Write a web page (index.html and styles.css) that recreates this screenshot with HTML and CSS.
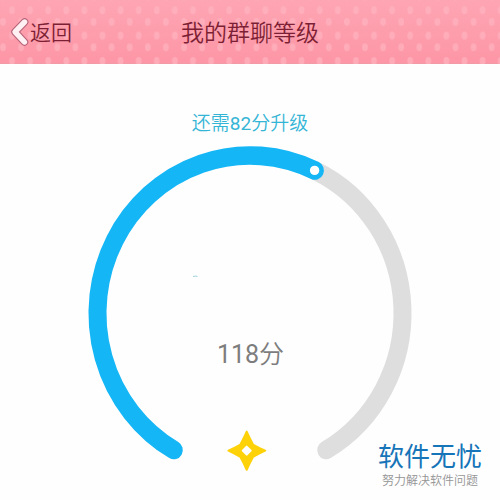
FILE: index.html
```
<!DOCTYPE html>
<html lang="zh-CN">
<head>
<meta charset="utf-8">
<title>我的群聊等级</title>
<link rel="stylesheet" href="styles.css">
</head>
<body>
<header class="bar">
  <svg class="dots" width="500" height="64" aria-hidden="true">
    <defs>
      <pattern id="dots" x="3" y="-2.6" width="18.1" height="25.4" patternUnits="userSpaceOnUse">
        <ellipse cx="9" cy="12.9" rx="2.9" ry="4" />
        <ellipse cx="0" cy="24.4" rx="2.9" ry="4" />
        <ellipse cx="18.1" cy="24.4" rx="2.9" ry="4" />
        <ellipse cx="0" cy="-1" rx="2.9" ry="4" />
        <ellipse cx="18.1" cy="-1" rx="2.9" ry="4" />
      </pattern>
    </defs>
    <rect width="500" height="64" fill="url(#dots)" />
  </svg>
  <a class="back">
    <svg class="chevron" width="20" height="30" viewBox="0 0 20 30">
      <path class="edge" d="M15.6 5 6 14.8 15.4 25" />
      <path class="core" d="M15.6 5 6 14.8 15.4 25" />
    </svg>
    <span>返回</span>
  </a>
  <h1 class="title">我的群聊等级</h1>
</header>
<main class="level">
  <p class="hint">还需<span class="num">82</span>分升级</p>
  <div class="gauge">
    <svg class="ring" width="340" height="340" viewBox="80 140 340 340">
      <g transform="translate(250 313.3) scale(1 1.035)">
        <path class="track" d="M64.9-138A152.5 152.5 0 0 1 76.2 132.1" />
        <path class="fill" d="M-76.2 132.1A152.5 152.5 0 0 1 64.9-138" />
      </g>
      <circle class="knob" cx="314.6" cy="170.4" r="4.7" />
      <path class="speck" d="M193 276.6q2-1 4.5-.2" />
      <path class="star" d="M246.7 431.6Q249.3 437.5 253 444.5Q259 448 265.2 450.6Q259 453.4 253 457Q249.3 463.7 246.7 469.8Q244.1 463.7 240.4 457Q234.4 453.4 228.4 450.6Q234.4 448 240.4 444.5Q244.1 437.5 246.7 431.6Z" />
      <path class="hole" d="M246.7 446.6 250.7 450.6 246.7 454.6 242.7 450.6Z" />
    </svg>
    <p class="score"><span class="num">118</span>分</p>
  </div>
</main>
<aside class="mark">
  <strong>软件无忧</strong>
  <span>努力解决软件问题</span>
</aside>
</body>
</html>
```
FILE: styles.css
```
* { box-sizing: border-box; }
body {
  margin: 0;
  width: 500px;
  height: 500px;
  position: relative;
  overflow: hidden;
  background: #fefefe;
  font-family: Roboto, "Noto Sans CJK SC", sans-serif;
  font-weight: 350;
}
h1, p { margin: 0; font-weight: 350; }
.num { font-weight: 400; }
.bar {
  position: relative;
  height: 64px;
  display: grid;
  grid-template-columns: 1fr auto 1fr;
  align-items: center;
  background: linear-gradient(#fea5b3, #fd96a6);
  border-bottom: 1px solid #f39aa7;
  color: #7d1f34;
}
.dots { position: absolute; inset: 0; fill: #ffb8c3; opacity: .6; }
.back {
  position: relative;
  display: flex;
  align-items: center;
  padding-left: 9px;
  font-size: 21px;
  line-height: 30px;
}
.back span { margin: 2px 0 0 1px; }
.chevron { fill: none; stroke-linecap: round; stroke-linejoin: round; }
.edge { stroke: #b8647a; stroke-width: 7.6; }
.core { stroke: #fff0f3; stroke-width: 5.4; }
.title { position: relative; padding-top: 4px; font-size: 23px; line-height: 30px; }
.level { display: flex; flex-direction: column; align-items: center; padding-top: 45px; }
.hint { height: 31px; font-size: 19px; line-height: 29px; color: #35b5d6; }
.gauge { display: grid; justify-items: center; width: 340px; height: 340px; }
.ring, .score { grid-area: 1 / 1; }
.ring { fill: none; }
.track, .fill { stroke-width: 18; stroke-linecap: round; }
.track { stroke: #dedede; }
.fill { stroke: #14b6f6; }
.knob, .hole { fill: #fff; }
.hole { stroke: #fff; stroke-width: 2; stroke-linejoin: round; }
.speck { stroke: #9bd3dc; stroke-width: 1; }
.star { fill: #fed208; stroke: #fed208; stroke-width: 2; stroke-linejoin: round; }
.score { margin-top: 197px; padding-left: 1px; font-size: 25px; line-height: 36px; color: #7d7d7d; }
.mark {
  position: absolute;
  left: 378px;
  top: 442px;
  display: flex;
  flex-direction: column;
  align-items: center;
  white-space: nowrap;
}
.mark strong { font-size: 26px; line-height: 30px; font-weight: 400; color: #1674b8; }
.mark span { font-size: 12px; line-height: 18px; color: #959595; }
```
